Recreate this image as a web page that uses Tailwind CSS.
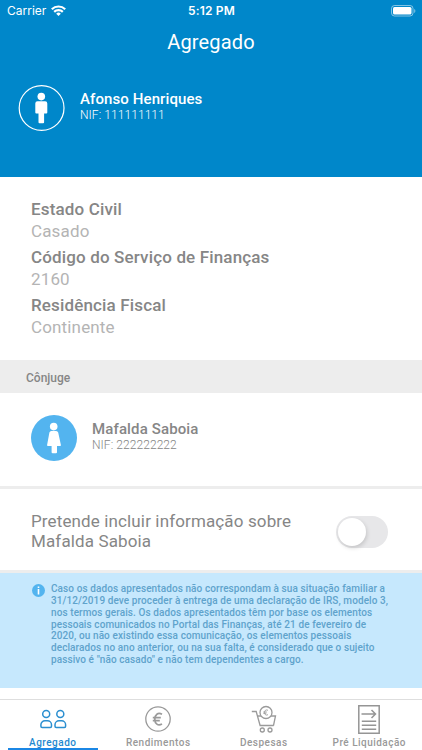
<!DOCTYPE html>
<html lang="pt">
<head>
<meta charset="utf-8">
<meta name="viewport" content="width=device-width, initial-scale=1">
<title>Agregado</title>
<script src="https://cdn.jsdelivr.net/npm/@tailwindcss/browser@4"></script>
</head>
<body class="bg-white">
<div class="flex flex-col w-[422px] h-[750px] overflow-hidden bg-white font-[Roboto,sans-serif] whitespace-nowrap">

  <header class="h-[177px] shrink-0 bg-[#0087ca] text-white flex flex-col">
    <div class="h-[22px] grid grid-cols-3 items-center pl-[7px] pr-[6px] font-[Inter,sans-serif] text-[12px] leading-[22px]">
      <div class="flex items-center gap-[5px]">
        <span>Carrier</span>
        <svg class="w-[15px] h-[11px] mb-[2px]" viewBox="0 0 15 11" fill="none" stroke="#fff" stroke-width="2.200">
          <path d="M.8 4.200a9.600 9.600 0 0 1 13.400 0M3.200 6.900a6.100 6.100 0 0 1 8.600 0"/>
          <path d="M7.500 11 5.200 8.700a3.300 3.300 0 0 1 4.600 0z" fill="#fff" stroke="none"/>
        </svg>
      </div>
      <span class="text-center font-semibold tracking-[0.2px]">5:12 PM</span>
      <svg class="w-[25px] h-[12px] justify-self-end" viewBox="0 0 25 12">
        <rect x=".5" y=".5" width="21.500" height="10.500" rx="3" fill="none" stroke="#fff" stroke-opacity=".5"/>
        <rect x="2" y="2" width="18.500" height="7.500" rx="1.500" fill="#fff"/>
        <path d="M23.200 4v4c1.600-.7 1.600-3.300 0-4z" fill="#fff" fill-opacity=".5"/>
      </svg>
    </div>
    <h1 class="h-[42px] text-center text-[20px] leading-[41px] tracking-[0.15px]">Agregado</h1>
    <div class="flex items-start pl-[18px] pt-[21px]">
      <svg class="w-[47px] h-[47px]" viewBox="0 0 47 47">
        <circle cx="23.600" cy="23" r="22.400" fill="none" stroke="#fff" stroke-width="1.200"/>
        <g fill="#fff">
          <circle cx="23.300" cy="11.600" r="3.800"/>
          <path d="M19.500 16.200h7.600a2.200 2.200 0 0 1 2.200 2.200v9.200a1 1 0 0 1-1 1h-2.200v8.700a1 1 0 0 1-1 1h-3.600a1 1 0 0 1-1-1v-8.700h-2.200a1 1 0 0 1-1-1v-9.200a2.200 2.200 0 0 1 2.200-2.200z"/>
        </g>
      </svg>
      <div class="pl-[15px] pt-[5px]">
        <div class="text-[15px] leading-[18px] font-medium tracking-[0.1px]">Afonso Henriques</div>
        <div class="text-[12px] leading-[14px] font-light tracking-[0.07px]">NIF: 111111111</div>
      </div>
    </div>
  </header>

  <dl class="h-[183px] shrink-0 pl-[31px] pt-[20px] text-[17px] tracking-[0.15px]">
    <dt class="leading-[25px] h-[23px] font-medium text-[#868686]">Estado Civil</dt>
    <dd class="leading-[23px] h-[25px] text-[#b4b4b4]">Casado</dd>
    <dt class="leading-[25px] h-[23px] font-medium text-[#868686]">Código do Serviço de Finanças</dt>
    <dd class="leading-[23px] h-[25px] text-[#b4b4b4]">2160</dd>
    <dt class="leading-[25px] h-[23px] font-medium text-[#868686]">Residência Fiscal</dt>
    <dd class="leading-[23px] h-[25px] text-[#b4b4b4]">Continente</dd>
  </dl>

  <h2 class="h-[33px] shrink-0 bg-[#ededed] pl-[26px] text-[12px] leading-[36px] font-medium text-[#868686]">Cônjuge</h2>

  <section class="h-[93px] shrink-0 flex items-start pl-[31px] pt-[22px]">
    <svg class="w-[46px] h-[46px]" viewBox="0 0 46 46">
      <circle cx="23" cy="23" r="23" fill="#53b4ef"/>
      <g fill="#fff">
        <circle cx="22.700" cy="11.600" r="3.800"/>
        <path d="M20.300 16h4.800a2.200 2.200 0 0 1 2.100 1.600l2.700 12.400q.2 1-.8 1h-3.100v6.200a1 1 0 0 1-1 1h-3.400a1 1 0 0 1-1-1V31h-3.700q-1 0-.8-1l2.300-12.400a2.200 2.200 0 0 1 1.900-1.600z"/>
      </g>
    </svg>
    <div class="pl-[15px] pt-[5px]">
      <div class="text-[15px] leading-[18px] font-medium tracking-[0.13px] text-[#868686]">Mafalda Saboia</div>
      <div class="text-[12px] leading-[14px] font-light tracking-[0.07px] text-[#868686]">NIF: 222222222</div>
    </div>
  </section>

  <section class="h-[87px] shrink-0 border-y-[3px] border-[#ededed] flex justify-between items-start pl-[31px] pr-[34px]">
    <p class="pt-[22px] text-[17px] leading-[20px] tracking-[0.13px] text-[#868686]">Pretende incluir informação sobre<br>Mafalda Saboia</p>
    <div class="mt-[27px] w-[52px] h-[32px] rounded-full bg-[#e7e7e9] p-[2px]">
      <div class="w-[28px] h-[28px] rounded-full bg-white shadow-[1px_2px_4px_rgba(0,0,0,0.15)]"></div>
    </div>
  </section>

  <section class="h-[115px] shrink-0 bg-[#c6e8fd] flex items-start pl-[32px] pt-[10px]">
    <svg class="w-[13px] h-[13px] mt-[1px]" viewBox="0 0 13 13">
      <circle cx="6.500" cy="6.500" r="6.500" fill="#53b4ef"/>
      <path d="M5.700 2.400h1.600v1.700H5.700zM5.700 5.100h1.600v5.500H5.700z" fill="#fff"/>
    </svg>
    <p class="pl-[6px] text-[10px] leading-[11.850px] font-medium tracking-[0.09px] text-[#5fa3cc]">Caso os dados apresentados não correspondam à sua situação familiar a<br>31/12/2019 deve proceder à entrega de uma declaração de IRS, modelo 3,<br>nos termos gerais. Os dados apresentados têm por base os elementos<br>pessoais comunicados no Portal das Finanças, até 21 de fevereiro de<br>2020, ou não existindo essa comunicação, os elementos pessoais<br>declarados no ano anterior, ou na sua falta, é considerado que o sujeito<br>passivo é "não casado" e não tem dependentes a cargo.</p>
  </section>

  <nav class="mt-[11px] h-[51px] shrink-0 border-t border-[#dedede] grid grid-cols-4 text-[10px] leading-[12px] font-medium tracking-[0.5px] text-[#999]">
    <div class="flex flex-col items-center text-[#1e88cf]">
      <svg class="w-[28px] h-[36px]" viewBox="0 0 28 36" fill="none" stroke="#2b8fd0" stroke-width="1.500">
        <circle cx="7.200" cy="14" r="3.500"/><circle cx="21.300" cy="14" r="3.500"/>
        <path d="M1.900 26.300v-1.500a4 4 0 0 1 4-4h2.600a4 4 0 0 1 4 4v1.500a1.200 1.200 0 0 1-1.200 1.200H3.100a1.200 1.200 0 0 1-1.200-1.200zM16 26.300v-1.500a4 4 0 0 1 4-4h2.600a4 4 0 0 1 4 4v1.500a1.200 1.200 0 0 1-1.200 1.200h-8.200a1.200 1.200 0 0 1-1.200-1.200z"/>
      </svg>
      <span class="pt-px">Agregado</span>
      <div class="w-[90px] h-[2px] -mt-px bg-[#1b87e5]"></div>
    </div>
    <div class="flex flex-col items-center">
      <svg class="w-[26px] h-[36px]" viewBox="0 0 26 36" fill="none" stroke="#9a9a9a">
        <circle cx="13" cy="19" r="12.200" stroke-width="1.300"/>
        <path d="M17 14.300c-4-2.200-7.200.3-7.200 4.900s3.200 7 7.200 4.800M7.800 17.700h8M7.800 20.700h7" stroke-width="1.700"/>
      </svg>
      <span class="pt-px">Rendimentos</span>
    </div>
    <div class="flex flex-col items-center">
      <svg class="w-[26px] h-[36px]" viewBox="0 0 26 36" fill="none" stroke="#9a9a9a" stroke-width="1.300">
        <path d="M.8 11.500h4.400l3.900 14h13.500M6.500 16h18l-2 9.500"/>
        <circle cx="15" cy="12.500" r="6" fill="#fff"/>
        <path d="M17 10.300c-2-1-3.500.1-3.500 2.200s1.500 3.200 3.500 2.200M12.300 12h3.500M12.300 13.300h3" stroke-width=".9"/>
        <circle cx="11.300" cy="30" r="2"/><circle cx="19" cy="30" r="2"/>
      </svg>
      <span class="pt-px">Despesas</span>
    </div>
    <div class="flex flex-col items-center">
      <svg class="w-[22px] h-[36px]" viewBox="0 0 22 36" fill="none" stroke="#959595" stroke-width="1.500">
        <path d="M.8 5.800h20.400v27.400H.8zM3.500 14h14M13.500 10l4 4-4 4M3.800 21.300h14.400M3.800 25.300h14.400M3.800 29.300h14.400"/>
      </svg>
      <span class="pt-px tracking-[0.47px]">Pré Liquidação</span>
    </div>
  </nav>
</div>
</body>
</html>
